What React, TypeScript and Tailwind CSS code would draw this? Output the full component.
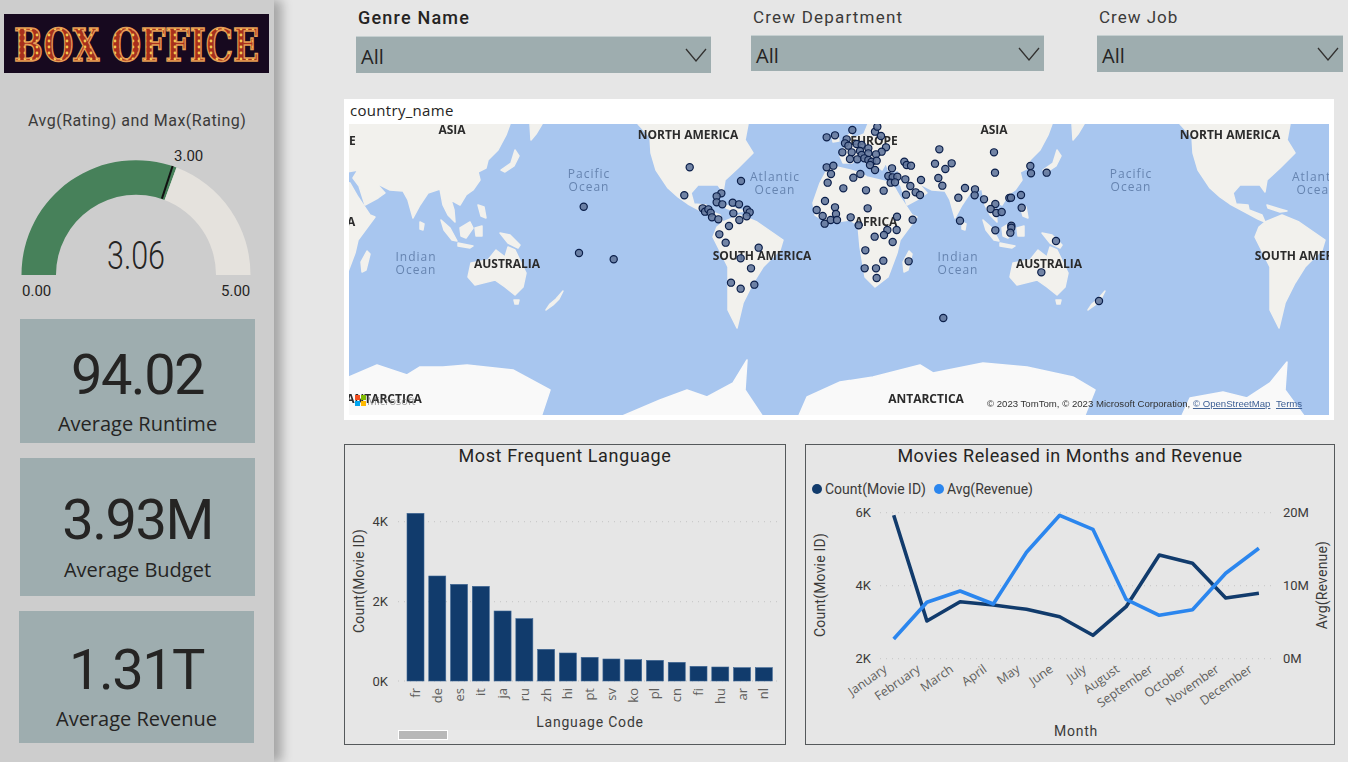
const filters = [
  { label: 'Genre Name', labelClass: 'text-[18px] font-medium text-[#252423] pl-[2px] tracking-[1.2px]', width: 'w-[355px]', box: 'mt-[1px] h-[37px]' },
  { label: 'Crew Department', labelClass: 'text-[17px] text-[#3b3a39] pl-[2px] tracking-[1.2px]', width: 'w-[293px] ml-[40px]', box: 'h-[36px]' },
  { label: 'Crew Job', labelClass: 'text-[17px] text-[#3b3a39] pl-[2px] tracking-[1px]', width: 'w-[246px] ml-[53px]', box: 'h-[37px]' },
];

const stats = [
  { value: '94.02', label: 'Average Runtime', box: 'ml-[20px] w-[235px] h-[124px] pt-[29px]', gap: 'mt-[10px]' },
  { value: '3.93M', label: 'Average Budget', box: 'ml-[20px] w-[235px] h-[138px] mt-[15px] pt-[35px]', gap: 'mt-[11px]' },
  { value: '1.31T', label: 'Average Revenue', box: 'ml-[19px] w-[235px] h-[132px] mt-[15px] pt-[32px]', gap: 'mt-[10px]' },
];

const bars = [
  ['fr', 220], ['de', 408], ['es', 433], ['it', 439], ['ja', 513], ['ru', 536], ['zh', 628], ['hi', 639], ['pt', 652],
  ['sv', 657], ['ko', 659], ['pl', 661], ['cn', 667], ['fi', 679], ['hu', 681], ['ar', 683], ['nl', 683],
] as const;

const months = ['January', 'February', 'March', 'April', 'May', 'June', 'July', 'August', 'September', 'October', 'November', 'December'];
const countLine = [515.3, 621, 601.7, 605, 609.3, 616.7, 635.3, 606.7, 555, 563.3, 598, 593.3];
const revenueLine = [639, 602.3, 591, 604, 552.3, 515.3, 529.3, 599.3, 615.3, 609.7, 573.3, 548.3];

const toPoints = (ys: number[]) => ys.map((y, i) => `${893.7 + i * 33.2},${y}`).join(' ');

// map dots, one list per zoomed area of the map
const europeDots = [
  [80, 52], [105, 46], [157, 30], [225, 35], [232, 20], [243, 48], [140, 58], [135, 70], [145, 77], [170, 72], [185, 75], [205, 85], [258, 82],
  [127, 97], [155, 97], [180, 93], [185, 105], [205, 100], [245, 95], [228, 103], [150, 117], [172, 118], [193, 115], [205, 120], [215, 125],
  [230, 122], [210, 135], [225, 150], [80, 142], [100, 137], [93, 162], [83, 188], [160, 173], [181, 162], [130, 205], [198, 211], [251, 212],
  [276, 145], [313, 125], [320, 135], [333, 137], [265, 168], [278, 172], [292, 170], [272, 188], [285, 187], [316, 178], [331, 198], [363, 180],
  [347, 217], [360, 225], [318, 224], [418, 88], [405, 131], [436, 147], [455, 130], [415, 174], [427, 197],
  [75, 243], [50, 270], [68, 288], [105, 262], [108, 282], [92, 300], [111, 300], [74, 311], [152, 292], [176, 316], [203, 265], [291, 290],
  [338, 299], [262, 330], [290, 330], [252, 345], [224, 350], [278, 366], [196, 391], [250, 422], [194, 445], [228, 445], [230, 474], [326, 424],
].map(([x, y]) => [800 + x / 3, 120 + y / 3]);
const asiaDots = [
  [132, 97], [135, 158], [241, 138], [243, 160], [290, 158], [45, 204], [75, 208], [74, 226], [25, 233], [102, 238], [178, 234], [183, 233],
  [213, 225], [215, 263], [136, 252], [122, 267], [139, 279], [155, 276], [30, 302], [136, 331], [184, 317], [184, 323], [181, 338], [318, 363],
  [274, 457], [447, 543],
].map(([x, y]) => [950 + x / 3, 120 + y / 3]);
const americaDots = [
  [153, 33], [94, 70], [80, 79], [80, 97], [97, 103], [128, 98], [147, 103], [38, 115], [45, 125], [55, 118], [62, 128], [66, 142], [85, 148],
  [171, 119], [179, 127], [170, 139], [130, 130], [148, 150], [117, 168], [88, 193], [107, 218], [206, 233], [152, 265], [183, 295], [123, 338],
  [152, 356], [193, 344],
].map(([x, y]) => [690 + x / 3, 170 + y / 3]);
const otherDots = [[583.7, 206.7], [579, 253], [613.7, 259.3], [689.7, 167.3], [684.3, 195.3], [943.3, 318]];
const mapDots = [...otherDots, ...americaDots, ...europeDots, ...asiaDots];

const continents = [
  { text: 'ASIA', xs: [452, 994], y: 134 },
  { text: 'NORTH AMERICA', xs: [688, 1230], y: 139 },
  { text: 'EUROPE', xs: [332, 874], y: 145 },
  { text: 'AFRICA', xs: [334, 876], y: 226 },
  { text: 'AUSTRALIA', xs: [507, 1049], y: 268 },
  { text: 'SOUTH AMERICA', xs: [762, 1304], y: 260 },
  { text: 'ANTARCTICA', xs: [384, 926], y: 403 },
];

const oceans = [
  { lines: ['Pacific', 'Ocean'], xs: [589, 1131], y: 178 },
  { lines: ['Atlantic', 'Ocean'], xs: [775, 1317], y: 181 },
  { lines: ['Indian', 'Ocean'], xs: [416, 958], y: 261 },
];

const LAND = '#f2f1ed';

const Land = ({ shift }: { shift: number }) => (
  <g transform={`translate(${shift} 0)`} fill={LAND} stroke={LAND} strokeWidth="1.5" strokeLinejoin="round">
    {/* north america */}
    <polygon points="638,124 650,137 651,153 656,170 668,188 678,197 688,204 703,212 716,219 723,222 720,215 707,210 706,205 694,204 691,193 698,185 718,185 723,192 725,180 738,168 753,153 745,140 748,124" />
    {/* south america */}
    <polygon points="723,222 740,215 757,222 783,240 780,250 763,267 753,283 743,303 737,328 728,310 728,287 728,267 713,237 717,227" />
    <polygon points="725,205 738,209 745,211 738,212 726,208" />
    {/* africa */}
    <polygon points="828,168 820,183 813,203 815,215 828,223 850,220 858,225 860,247 865,277 875,287 888,277 897,253 900,240 917,217 912,215 900,197 892,183 867,177 860,173 850,170 837,167" />
    <polygon points="909,251 912,254 908,270 904,272 903,262" />
    {/* eurasia */}
    <polygon points="868,124 864,134 852,139 843,149 840,156 843,163 852,163 858,158 865,162 873,170 876,165 882,170 886,163 889,172 900,170 895,178 901,186 907,205 920,198 927,193 918,183 932,190 945,191 950,200 955,218 962,205 970,193 982,189 985,205 990,215 997,222 996,210 993,200 1002,205 1008,195 1015,190 1022,180 1020,172 1028,168 1030,160 1040,150 1048,135 1052,124" />
    <polygon points="846,137 851,133 853,139 849,143" />
    <polygon points="832,136 838,135 839,141 833,142" />
    {/* asia islands */}
    <polygon points="1072,124 1084,124 1078,134 1073,140" />
    <polygon points="1057,150 1061,156 1056,166 1047,172 1043,170 1053,163" />
    <polygon points="983,220 992,228 999,241 994,240 986,230" />
    <polygon points="1002,228 1012,222 1015,228 1008,238 1003,236" />
    <polygon points="1000,243 1015,246 1012,248 1000,246" />
    <polygon points="1017,228 1024,226 1024,236 1018,236" />
    <polygon points="1020,205 1026,207 1028,218 1023,216" />
    <polygon points="1042,233 1052,235 1062,245 1060,248 1050,243" />
    <polygon points="962,222 966,224 965,230 962,229" />
    {/* australia */}
    <polygon points="1010,277 1013,263 1030,260 1038,250 1047,257 1050,247 1057,250 1068,273 1065,287 1057,295 1047,287 1037,280 1017,285" />
    <polygon points="1056,300 1061,300 1060,304 1057,304" />
    <polygon points="1105,291 1101,299 1095,305 1088,310 1092,304 1098,299" />
  </g>
);

const Chevron = () => (
  <svg width="22" height="14" viewBox="0 0 22 14" fill="none" stroke="#323130" strokeWidth="1.3">
    <polyline points="1,1 11,13 21,1" />
  </svg>
);

const Gauge = () => (
  <svg width="274" height="173" viewBox="0 133 274 173" className="block">
    <path d="M21.5 275 A114.5 114.5 0 0 1 176.5 167.6 L164.6 200 A80 80 0 0 0 56 275 Z" fill="#47815a" />
    <path d="M176.5 167.6 A114.5 114.5 0 0 1 250.5 275 L216 275 A80 80 0 0 0 164.6 200 Z" fill="#e5e2dd" />
    <line x1="172.6" y1="166" x2="161.9" y2="198.6" stroke="#111" strokeWidth="2" />
    <text x="174" y="161" fontSize="15" fill="#252423">3.00</text>
    <text x="22" y="296" fontSize="15" fill="#252423">0.00</text>
    <text x="221" y="296" fontSize="15" fill="#252423">5.00</text>
    <text x="136" y="269" fontSize="38" fontWeight="300" textAnchor="middle" fill="#252423" textLength="58" lengthAdjust="spacingAndGlyphs">3.06</text>
  </svg>
);

const WorldMap = () => (
  <svg width="980" height="291" viewBox="349 124 980 291" className="block font-['Open_Sans',sans-serif]">
    <defs>
      <filter id="soft" x="-2%" y="-2%" width="104%" height="104%">
        <feGaussianBlur stdDeviation="0.6" />
      </filter>
    </defs>
    <rect x="349" y="124" width="980" height="291" fill="#a8c6ef" />
    <g filter="url(#soft)">
      <Land shift={-542} />
      <Land shift={0} />
      <Land shift={542} />
      <g fill="#f9f9f9" stroke="#f9f9f9" strokeWidth="1.5" strokeLinejoin="round">
        <polygon points="340,380 349,377 377,365 407,375 420,367 443,367 467,365 513,370 550,390 540,420 340,420" />
        <polygon points="613,420 660,400 687,390 707,397 733,383 747,360 745,390 765,420" />
        <polygon points="797,420 807,397 840,382 873,377 920,365 933,373 983,363 1027,367 1073,377 1095,390 1083,420" />
        <polygon points="1180,420 1190,398 1223,392 1247,398 1270,383 1287,362 1285,390 1307,420" />
      </g>
    </g>

    {oceans.flatMap((o) =>
      o.xs.map((x) => (
        <text key={o.lines[0] + x} fontSize="12" letterSpacing="1" fill="#6684b0" textAnchor="middle">
          <tspan x={x} y={o.y}>{o.lines[0]}</tspan>
          <tspan x={x} dy="13">{o.lines[1]}</tspan>
        </text>
      )),
    )}

    {continents.flatMap((c) =>
      c.xs.map((x) => (
        <text key={c.text + x} x={x} y={c.y} fontSize="12" fontWeight="700" fill="#2b2b2b" textAnchor="middle">
          {c.text}
        </text>
      )),
    )}

    {/* microsoft mark */}
    <text x="367" y="405" fontSize="11" fill="#737373" fillOpacity="0.7">Microsoft</text>
    <rect x="355" y="395" width="5" height="5" fill="#f25022" />
    <rect x="361" y="395" width="5" height="5" fill="#7fba00" />
    <rect x="355" y="401" width="5" height="5" fill="#00a4ef" />
    <rect x="361" y="401" width="5" height="5" fill="#ffb900" />

    {mapDots.map(([x, y], i) => (
      <circle key={i} cx={x} cy={y} r="3.6" fill="#64789c" fillOpacity="0.9" stroke="#0b1f4a" strokeWidth="1.2" />
    ))}

    <text y="407" fontSize="9.6" className="font-['Liberation_Sans',sans-serif]" fill="#333">
      <tspan x="987">© 2023 TomTom, © 2023 Microsoft Corporation, </tspan>
      <tspan fill="#3d5f94" textDecoration="underline">© OpenStreetMap</tspan>
      <tspan x="1276" fill="#3d5f94" textDecoration="underline">Terms</tspan>
    </text>
  </svg>
);

const LanguageChart = () => (
  <svg width="440" height="275" viewBox="345 469 440 275" className="block">
    {[521.7, 601.7, 681].map((y) => (
      <line key={y} x1="398" x2="782" y1={y} y2={y} stroke="#c4c4c4" strokeDasharray="1 5" />
    ))}
    {[['4K', 526], ['2K', 606], ['0K', 686]].map(([t, y]) => (
      <text key={t} x="388" y={y} fontSize="13" fill="#3b3a39" textAnchor="end">{t}</text>
    ))}
    {bars.map(([code, top], i) => {
      const x = 407 + i * 21.77;
      const y = 440 + top / 3;
      return (
        <g key={code}>
          <rect x={x} y={y} width="17" height={681 - y} fill="#113b6c" stroke="#3f6795" strokeWidth="0.6" />
          <text transform={`translate(${x + 13} 688) rotate(-90)`} fontSize="13" fill="#605e5c" textAnchor="end" className="font-['Open_Sans',sans-serif]">{code}</text>
        </g>
      );
    })}
    <text transform="translate(364 581) rotate(-90)" fontSize="14" fill="#3b3a39" textAnchor="middle" letterSpacing="0.2">Count(Movie ID)</text>
    <text x="590" y="727" fontSize="14" fill="#3b3a39" textAnchor="middle" letterSpacing="0.8">Language Code</text>
    <rect x="398" y="730" width="384" height="10" fill="#e8e8e8" />
    <rect x="398.5" y="730.5" width="49" height="9" fill="#b8b8b8" stroke="#ffffff" />
  </svg>
);

const MonthChart = () => (
  <svg width="528" height="275" viewBox="806 469 528 275" className="block">
    <circle cx="817" cy="489" r="5" fill="#113b6c" />
    <text x="825" y="494" fontSize="14" fill="#3b3a39">Count(Movie ID)</text>
    <circle cx="939" cy="489" r="5" fill="#2b86ee" />
    <text x="947" y="494" fontSize="14" fill="#3b3a39">Avg(Revenue)</text>
    {[512.7, 585.7, 658.7].map((y) => (
      <line key={y} x1="880" x2="1274" y1={y} y2={y} stroke="#c4c4c4" strokeDasharray="1 5" />
    ))}
    {[['6K', 517], ['4K', 590], ['2K', 663]].map(([t, y]) => (
      <text key={t} x="871" y={y} fontSize="13" fill="#3b3a39" textAnchor="end">{t}</text>
    ))}
    {[['20M', 517], ['10M', 590], ['0M', 663]].map(([t, y]) => (
      <text key={t} x="1283" y={y} fontSize="13" fill="#3b3a39">{t}</text>
    ))}
    <polyline points={toPoints(countLine)} fill="none" stroke="#113b6c" strokeWidth="3.6" strokeLinejoin="round" />
    <polyline points={toPoints(revenueLine)} fill="none" stroke="#2b86ee" strokeWidth="3.6" strokeLinejoin="round" />
    {months.map((m, i) => (
      <text key={m} transform={`translate(${888 + i * 33.2} 671) rotate(-35)`} fontSize="12.5" fill="#605e5c" textAnchor="end" className="font-['Open_Sans',sans-serif]">{m}</text>
    ))}
    <text transform="translate(825 585) rotate(-90)" fontSize="14" fill="#3b3a39" textAnchor="middle" letterSpacing="0.2">Count(Movie ID)</text>
    <text transform="translate(1327 585) rotate(-90)" fontSize="14" fill="#3b3a39" textAnchor="middle" letterSpacing="0.2">Avg(Revenue)</text>
    <text x="1076" y="736" fontSize="14" fill="#3b3a39" textAnchor="middle" letterSpacing="0.8">Month</text>
  </svg>
);

const Logo = () => (
  <div className="ml-[4px] mt-[14px] w-[265px] h-[59px] bg-[#17091f]">
    <svg width="265" height="59" viewBox="0 0 265 59" className="block">
      <defs>
        <pattern id="bulbs" width="6" height="6" patternUnits="userSpaceOnUse">
          <rect width="6" height="6" fill="#a8301c" />
          <circle cx="3" cy="3" r="1.4" fill="#f4c84f" />
        </pattern>
      </defs>
      <text
        x="10"
        y="46.5"
        fontSize="45"
        fontWeight="700"
        textLength="245"
        lengthAdjust="spacingAndGlyphs"
        fill="url(#bulbs)"
        stroke="#e59c55"
        strokeWidth="1.6"
        className="font-['DejaVu_Serif',serif]"
      >
        BOX OFFICE
      </text>
    </svg>
  </div>
);

export default function App() {
  return (
    <div className="flex w-[1348px] h-[762px] overflow-hidden bg-[#e6e6e6] font-['Roboto',sans-serif]">
      <aside className="relative z-10 w-[274px] shrink-0 bg-[#cdcdcd] shadow-[8px_0_10px_rgba(0,0,0,0.28)]">
        <Logo />
        <div className="mt-[37px] h-[23px] pl-[28px] text-[16px] leading-[22px] tracking-[0.5px] text-[#3b3a39] whitespace-nowrap">
          Avg(Rating) and Max(Rating)
        </div>
        <Gauge />
        <div className="mt-[13px]">
          {stats.map((s) => (
            <div key={s.label} className={`${s.box} bg-[#9eadaf] text-center`}>
              <div className="text-[56px] leading-[54px] text-[#252423] tracking-[-1.5px]">{s.value}</div>
              <div className={`${s.gap} font-['Open_Sans',sans-serif] text-[20px] leading-[24px] text-[#252423]`}>{s.label}</div>
            </div>
          ))}
        </div>
      </aside>

      <main className="flex-1 pl-[70px]">
        <div className="flex h-[99px] ml-[12px]">
          {filters.map((f) => (
            <div key={f.label} className={f.width}>
              <div className={`h-[35px] flex items-center ${f.labelClass}`}>{f.label}</div>
              <div className={`${f.box} flex items-center justify-between pl-[5px] pr-[4px] bg-[#9eadaf] border-t border-[#c5cfd0]`}>
                <span className="font-['Open_Sans',sans-serif] text-[20px] text-[#252423] pt-[4px]">All</span>
                <Chevron />
              </div>
            </div>
          ))}
        </div>

        <section className="w-[990px] h-[321px] bg-white px-[5px]">
          <div className="h-[25px] pl-px font-['Open_Sans',sans-serif] text-[15px] leading-[22px] text-[#252423] tracking-[0.3px]">country_name</div>
          <WorldMap />
        </section>

        <div className="flex gap-[19px] mt-[24px]">
          <section className="w-[442px] h-[301px] border border-[#55595b]">
            <h2 className="h-[24px] text-center text-[18px] leading-[22px] text-[#252423] tracking-[0.6px]">Most Frequent Language</h2>
            <LanguageChart />
          </section>
          <section className="w-[530px] h-[301px] border border-[#55595b]">
            <h2 className="h-[24px] text-center text-[18px] leading-[22px] text-[#252423] tracking-[0.5px]">Movies Released in Months and Revenue</h2>
            <MonthChart />
          </section>
        </div>
      </main>
    </div>
  );
}
